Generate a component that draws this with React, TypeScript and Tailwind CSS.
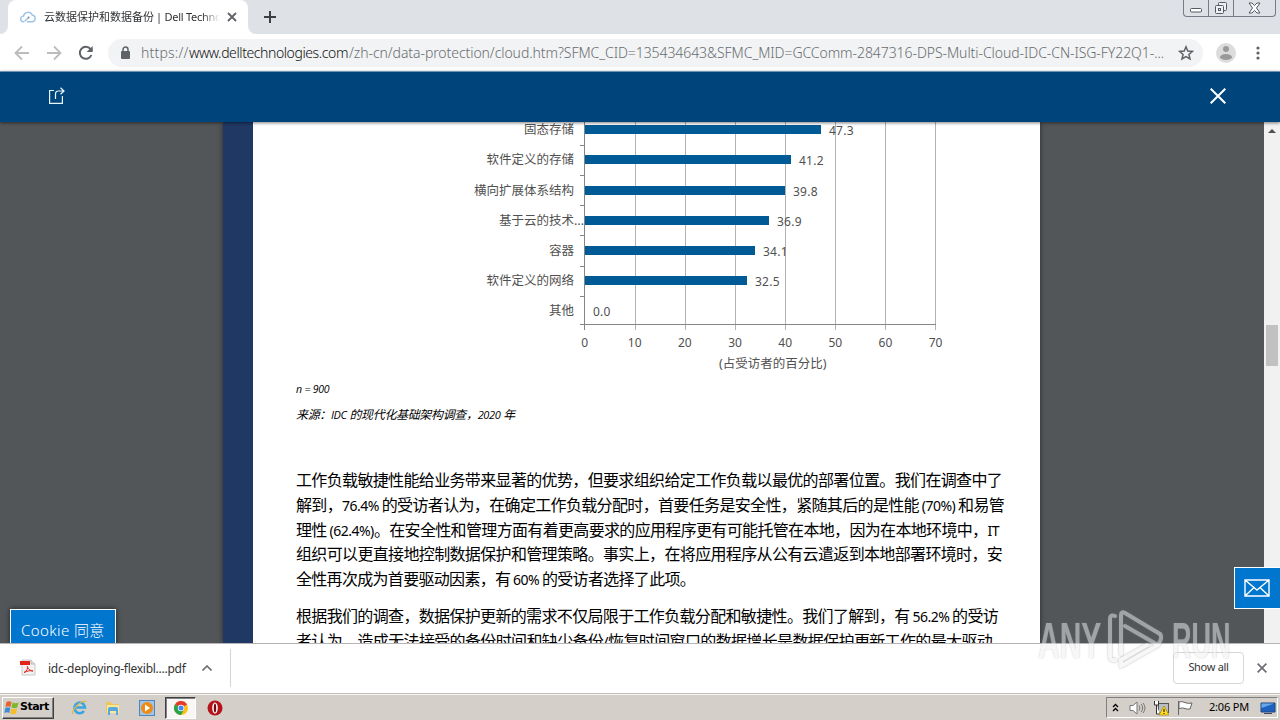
import type { ReactNode } from "react";

const bars = [
  { label: "固态存储", value: "47.3", width: 236 },
  { label: "软件定义的存储", value: "41.2", width: 206 },
  { label: "横向扩展体系结构", value: "39.8", width: 200 },
  { label: "基于云的技术", value: "36.9", width: 184, cut: true },
  { label: "容器", value: "34.1", width: 170 },
  { label: "软件定义的网络", value: "32.5", width: 162 },
  { label: "其他", value: "0.0", width: 0 },
];

const ticks = [0, 10, 20, 30, 40, 50, 60, 70];

const firstParagraph = [
  { text: "工作负载敏捷性能给业务带来显著的优势，但要求组织给定工作负载以最优的部署位置。我们在调查中了", width: 706 },
  { text: "解到，76.4% 的受访者认为，在确定工作负载分配时，首要任务是安全性，紧随其后的是性能 (70%) 和易管", width: 708 },
  { text: "理性 (62.4%)。在安全性和管理方面有着更高要求的应用程序更有可能托管在本地，因为在本地环境中，IT", width: 703 },
  { text: "组织可以更直接地控制数据保护和管理策略。事实上，在将应用程序从公有云遣返到本地部署环境时，安", width: 706 },
  { text: "全性再次成为首要驱动因素，有 60% 的受访者选择了此项。", width: 399 },
];

const secondParagraph = [
  { text: "根据我们的调查，数据保护更新的需求不仅局限于工作负载分配和敏捷性。我们了解到，有 56.2% 的受访", width: 702 },
  { text: "者认为，造成无法接受的备份时间和缺少备份/恢复时间窗口的数据增长是数据保护更新工作的最大驱动", width: 696 },
];

// Latin runs are set a little smaller than the Chinese glyphs around them
function Mixed({ text }: { text: string }) {
  return text.split(/([\x20-\x7e]+)/).map((part, i) =>
    i % 2 ? (
      <span key={i} className="text-[14px] tracking-[-0.5px] [word-spacing:-0.5px]">
        {part}
      </span>
    ) : (
      part
    )
  );
}

function Line({ text, width }: { text: string; width: number }) {
  return (
    <div
      className="h-[24.8px] whitespace-nowrap leading-[24.8px] [text-align-last:justify]"
      style={{ width }}
    >
      <Mixed text={text} />
    </div>
  );
}

function Tab() {
  return (
    <div className="flex h-[34px] shrink-0 items-end bg-[#dee1e6]">
      <div className="h-2 w-2 bg-white">
        <div className="h-2 w-2 rounded-br-lg bg-[#dee1e6]" />
      </div>
      <div className="flex h-[34px] w-[240px] items-center rounded-t-lg bg-white pl-3">
        <svg width="16" height="16" viewBox="0 0 16 16" fill="none" stroke="#9cc4e6" strokeWidth="1.4">
          <path d="M4 12.7H3.5a2.8 2.8 0 0 1 0-5.6A4.6 4.6 0 0 1 12.2 6a3.4 3.4 0 0 1 .3 6.7H7" />
          <path d="M4.5 12.5 8 9" />
          <circle cx="8.6" cy="8.6" r="1" fill="#5e8fc0" stroke="none" />
        </svg>
        <div className="ml-2 w-[176px] overflow-hidden whitespace-nowrap text-[11px] leading-5 text-[#303336] [mask-image:linear-gradient(90deg,#000_90%,transparent)]">
          云数据保护和数据备份<span className="ml-[2px] tracking-[-0.25px]">| Dell Techno</span>
        </div>
        <svg className="ml-[7px]" width="10" height="10" viewBox="0 0 10 10" stroke="#5f6368" strokeWidth="1.8">
          <path d="m1 1 8 8M9 1 1 9" />
        </svg>
      </div>
      <div className="h-2 w-2 bg-white">
        <div className="h-2 w-2 rounded-bl-lg bg-[#dee1e6]" />
      </div>
      <svg className="mb-[11px] ml-[8px]" width="12" height="12" viewBox="0 0 12 12" stroke="#3c4043" strokeWidth="2">
        <path d="M6 0v12M0 6h12" />
      </svg>
      <div className="mb-[17px] ml-auto mr-[4px] flex h-[17px] w-[93px] rounded-b-[4px] border border-t-0 border-[#777b85]">
        <div className="flex w-[25px] items-center justify-center border-r border-[#777b85]">
          <svg width="13" height="16" viewBox="0 0 13 16" fill="#fff" stroke="#555a65">
            <rect x=".5" y="8.5" width="11" height="3.5" rx="1" />
          </svg>
        </div>
        <div className="flex w-[25px] items-center justify-center border-r border-[#777b85]">
          <svg width="14" height="15" viewBox="0 0 14 15" fill="#eef0f3" stroke="#555a65">
            <rect x="4.5" y="1.5" width="8" height="8" rx="1" />
            <rect x="1.5" y="4.5" width="8" height="8" rx="1" />
            <rect x="4.5" y="7.5" width="2" height="2" />
          </svg>
        </div>
        <div className="flex flex-1 items-center justify-center">
          <svg width="13" height="12" viewBox="0 0 13 12" fill="#fff" stroke="#555a65">
            <path d="M1 1h3l2.5 2.6L9 1h3L8.5 6 12 11H9L6.5 8.4 4 11H1l3.5-5z" />
          </svg>
        </div>
      </div>
    </div>
  );
}

function Toolbar() {
  return (
    <div className="flex h-[37px] shrink-0 items-center bg-white pl-[14px]">
      <svg width="16" height="16" viewBox="0 0 16 16" fill="none" stroke="#babcbe" strokeWidth="1.8">
        <path d="M15 8H2M8 1.5 1.5 8 8 14.5" />
      </svg>
      <svg className="ml-4" width="16" height="16" viewBox="0 0 16 16" fill="none" stroke="#babcbe" strokeWidth="1.8">
        <path d="M1 8h13M8 1.5 14.5 8 8 14.5" />
      </svg>
      <svg className="ml-4" width="16" height="16" viewBox="0 0 16 16" fill="none" stroke="#5f6368" strokeWidth="2">
        <path d="M13.4 10A6 6 0 1 1 12.5 4L14 5.7" />
        <path d="M14.7 1v6H8.7z" fill="#5f6368" stroke="none" />
      </svg>
      <div className="ml-[14px] flex h-[28px] w-[1095px] shrink-0 items-center rounded-full bg-[#f1f3f4] pl-[12px]">
        <svg width="12" height="14" viewBox="0 0 12 14">
          <rect x="1" y="5" width="9" height="8" rx="1" fill="#5f6368" />
          <path d="M3 5.5V3.5a2.5 2.5 0 0 1 5 0v2" fill="none" stroke="#5f6368" strokeWidth="1.5" />
        </svg>
        <div className="ml-[9px] flex w-[1027px] whitespace-nowrap text-[14px] font-light leading-[26px] text-[#696d71]">
          <span className="w-[48px] tracking-[0.2px]">https://</span>
          <span className="w-[160px] tracking-[-0.41px] text-[#111]">www.delltechnologies.com</span>
          <span className="tracking-[-0.07px]">
            /zh-cn/data-protection/cloud.htm?SFMC_CID=135434643&amp;SFMC_MID=GCComm-2847316-DPS-Multi-Cloud-IDC-CN-ISG-FY22Q1-...
          </span>
        </div>
        <svg className="ml-[10px]" width="16" height="16" viewBox="0 0 16 16" fill="none" stroke="#5f6368" strokeWidth="1.5">
          <path d="m8 1.8 1.8 4.2 4.6.4-3.5 3 1.1 4.5-4-2.4-4 2.4 1.1-4.5-3.5-3 4.6-.4z" />
        </svg>
      </div>
      <svg className="ml-[13px]" width="20" height="20" viewBox="0 0 20 20">
        <circle cx="10" cy="10" r="10" fill="#dcdcdc" />
        <circle cx="10" cy="6" r="3" fill="#999" />
        <ellipse cx="10" cy="14" rx="6" ry="3" fill="#999" />
      </svg>
      <svg className="ml-[20px]" width="4" height="14" viewBox="0 0 4 14" fill="#5f6368">
        <circle cx="2" cy="2" r="1.6" />
        <circle cx="2" cy="7" r="1.6" />
        <circle cx="2" cy="12" r="1.6" />
      </svg>
    </div>
  );
}

function Header() {
  return (
    <div className="relative z-10 flex h-[51px] shrink-0 items-center justify-between border-t border-[#6d94b5] bg-[#00447c] pl-[49px] pr-[54px] shadow-[0_1px_3px_rgba(0,0,0,0.5)]">
      <svg className="mb-1" width="17" height="17" viewBox="0 0 17 17" fill="none" stroke="#e8f5fb" strokeWidth="1.2">
        <path d="M5 3.5H.6v12.8h12.8V9M6.5 12V7q0-3 3-3H15M11.5.8 15 4l-3.5 3.3" />
      </svg>
      <svg className="mb-[3px]" width="16" height="16" viewBox="0 0 16 16" stroke="#fff" strokeWidth="2">
        <path d="m.7.7 14.6 14.6M15.3.7.7 15.3" />
      </svg>
    </div>
  );
}

function Chart() {
  return (
    <div className="relative h-[254px] text-[12.5px] text-[#505050]">
      {/* grid and axes */}
      <svg className="absolute left-[331px] top-0" width="356" height="210" viewBox="0 0 356 210" fill="none">
        <path d="M51.5 0v208M101.5 0v208M151.5 0v208M201.5 0v208M251.5 0v208M301.5 0v208M351.5 0v208" stroke="#b2b2b2" />
        <path d="M.5 0v208M0 202.5h352" stroke="#858585" />
      </svg>
      <svg className="absolute left-[327px] top-0" width="5" height="210" viewBox="0 0 5 210">
        <path d="M0 23.5h5M0 53.5h5M0 83.5h5M0 113.5h5M0 144.5h5M0 174.5h5M0 202.5h5" stroke="#858585" />
      </svg>
      <div className="relative flex flex-col">
        {bars.map((bar, i) => (
          <div
            key={bar.label}
            className={`flex h-[30.1px] items-center ${i === 0 ? "-mt-[7.2px]" : ""}`}
          >
            <div className="relative w-[321px] whitespace-nowrap text-right leading-[17px]">
              {bar.label}
              {bar.cut && <span className="absolute left-[321px] top-0">...</span>}
            </div>
            <div className="ml-[11px] h-[9px] bg-[#005a96]" style={{ width: bar.width }} />
            <div className="ml-[8px] mt-[2px] text-[12px] leading-[17px] tracking-[0.25px]">
              {bar.value}
            </div>
          </div>
        ))}
      </div>
      <div className="relative ml-[306.5px] mt-[8.7px] flex text-[12px] leading-[17px]">
        {ticks.map((tick) => (
          <div key={tick} className="w-[50.15px] text-center">
            {tick}
          </div>
        ))}
      </div>
      <div className="relative ml-[466px] mt-[4px] whitespace-nowrap leading-[17px]">
        (占受访者的百分比)
      </div>
    </div>
  );
}

function Document() {
  return (
    <div className="flex w-[817px] shrink-0 bg-white shadow-[0_0_5px_rgba(0,0,0,0.5)]">
      <div className="w-[30px] shrink-0 bg-[#1f3864]" />
      <div className="w-[787px] shrink-0 text-black">
        <Chart />
        <div className="ml-[43px] font-['Open_Sans','Noto_Sans_CJK_SC',sans-serif] italic">
          <div className="mt-[4px] h-[18px] text-[10.5px] leading-[18px] tracking-[-0.2px]">n = 900</div>
          <div className="mt-[8px] h-[18px] whitespace-nowrap text-[12px] leading-[18px] tracking-[-0.35px]">
            来源：<span className="text-[11px]">IDC</span> 的现代化基础架构调查，
            <span className="text-[11px]">2020</span> 年
          </div>
        </div>
        <div className="ml-[43px] mt-[44px] text-[16px] tracking-[-0.8px]">
          {firstParagraph.map((line) => (
            <Line key={line.text} {...line} />
          ))}
          <div className="mt-[12px]">
            {secondParagraph.map((line) => (
              <Line key={line.text} {...line} />
            ))}
          </div>
        </div>
      </div>
    </div>
  );
}

function Viewer() {
  return (
    <div className="relative flex h-[521px] shrink-0 overflow-hidden bg-[#525659] pl-[223px]">
      <Document />
      <div className="ml-auto w-4 bg-[#f1f1f1]">
        <svg className="mx-auto mt-[7px]" width="8" height="4" viewBox="0 0 8 4" fill="#505050">
          <path d="M4 0 8 4H0z" />
        </svg>
        <div className="ml-[2px] mt-[192px] h-[41px] w-[12px] bg-[#c1c1c1]" />
      </div>
      <div className="absolute left-[10px] top-[487px] h-[40px] w-[106px] whitespace-nowrap border border-white bg-[#0076ce] pl-[10px] pt-[10px] text-[15px] font-light leading-5 tracking-[0.4px] text-white shadow-[0_0_5px_rgba(0,0,0,0.6)]">
        Cookie 同意
      </div>
      <div className="absolute right-0 top-[445px] flex h-[42px] w-[46px] items-center border border-r-0 border-white bg-[#0076ce] pl-[9px]">
        <svg width="26" height="18" viewBox="0 0 26 18" fill="none" stroke="#fff" strokeWidth="1.4">
          <path d="M1 1h24v16H1zM1 1l12 10L25 1M1 17l9-8.5M25 17l-9-8.5" />
        </svg>
      </div>
    </div>
  );
}

function Downloads() {
  return (
    <div className="flex h-[50px] shrink-0 items-center border-t border-[#b6b4b6] bg-white pb-[2px]">
      <svg className="ml-[19px]" width="18" height="18" viewBox="0 0 18 18">
        <path d="M3 1h9l4 4v11H3z" fill="#f2f2f2" stroke="#c8c8c8" />
        <path d="M12 1v4h4" fill="#ddd" stroke="#bbb" />
        <path d="M1 2h10v4H1z" fill="#e2231a" />
        <path d="M5 13.5C8 12 9 9 8.5 7.5c-.7-1 .5 4 5.5 4.5-4-1-6 .5-9 1.5z" fill="none" stroke="#e2231a" />
      </svg>
      <div className="ml-[11px] mt-[3px] w-[140px] whitespace-nowrap text-[12px] leading-5 tracking-[-0.27px] text-[#333]">
        idc-deploying-flexibl....pdf
      </div>
      <svg className="ml-[14px]" width="10" height="6" viewBox="0 0 10 6" fill="none" stroke="#6b6e72" strokeWidth="1.6">
        <path d="m.5 5.5 4.5-4.5 4.5 4.5" />
      </svg>
      <div className="ml-[18px] h-[38px] w-px bg-[#d4d4d4]" />
      <div className="ml-auto flex h-[32px] w-[71px] items-center justify-center whitespace-nowrap rounded-[4px] border border-[#d5d6d8] text-[11px] tracking-[-0.3px] text-[#333]">
        Show all
      </div>
      <svg className="ml-[13px] mr-[13px]" width="10" height="10" viewBox="0 0 10 10" stroke="#6b6e72" strokeWidth="1.7">
        <path d="m.6.6 8.8 8.8M9.4.6.6 9.4" />
      </svg>
    </div>
  );
}

function WindowsFlag() {
  return (
    <svg width="16" height="16" viewBox="0 0 16 16">
      <path d="M2.5 2Q5 .5 7.5 2L6.5 7Q4 5.5 1.5 7z" fill="#e8622c" />
      <path d="M8.5 2.5Q11 4 14.5 2.5L13.3 7.5Q10.5 9 7.5 7.5z" fill="#7cb82f" />
      <path d="M1.3 8Q4 6.5 6.3 8L5.3 13Q3 11.5.3 13z" fill="#3d8ddb" />
      <path d="M7.3 8.5Q10 10 13 8.5L12 13.5Q9 15 6.2 13.5z" fill="#f6bd27" />
    </svg>
  );
}

function TaskIcon({ children }: { children: ReactNode }) {
  return <div className="flex h-[22px] w-[34px] items-center justify-center">{children}</div>;
}

function Taskbar() {
  return (
    <div className="flex h-[28px] shrink-0 items-center border-t border-[#c4c1bb] bg-[#d4cfc8] shadow-[inset_0_1px_0_#f6f4f1]">
      <div className="ml-[2px] flex h-[22px] w-[52px] items-center border border-b-[#404040] border-l-white border-r-[#404040] border-t-white pl-px font-['DejaVu_Sans'] text-[11px] font-bold tracking-[-0.5px] text-black shadow-[inset_-1px_-1px_0_#808080]">
        <WindowsFlag />
        <span>Start</span>
      </div>
      <div className="ml-[8px] flex">
        <TaskIcon>
          <svg width="17" height="17" viewBox="0 0 17 17" fill="none">
            <path d="M13 12A5.3 5.3 0 1 1 14 8.5H4.5" stroke="#39a5e3" strokeWidth="2.6" />
            <path d="M2 15C-1 12 11 0 15.5 2.5" stroke="#e6b93e" strokeWidth="1.3" />
          </svg>
        </TaskIcon>
        <TaskIcon>
          <svg width="16" height="16" viewBox="0 0 16 16">
            <path d="M1 2h5l1 2h7v9H1z" fill="#ecc65a" />
            <path d="M2 5h12v8H2z" fill="#f9e89b" />
            <path d="M3 9q0-2 2-2h6q2 0 2 2v6h-2v-4H5v4H3z" fill="#55a9dc" />
          </svg>
        </TaskIcon>
        <TaskIcon>
          <svg width="16" height="16" viewBox="0 0 16 16">
            <rect x=".5" y=".5" width="15" height="15" fill="#9fc6e8" stroke="#5085ba" />
            <circle cx="8" cy="8" r="6" fill="#f08a16" />
            <path d="m6 4.5 5 3.5-5 3.5z" fill="#fff" />
          </svg>
        </TaskIcon>
        <div className="ml-px flex h-[22px] w-[31px] items-center justify-center border border-b-white border-l-[#404040] border-r-white border-t-[#404040] bg-[#f8f7f5] shadow-[inset_1px_1px_0_#808080]">
          <svg width="14" height="14" viewBox="0 0 14 14">
            <circle cx="7" cy="7" r="7" fill="#fbc116" />
            <path d="M7 7 .9 3.5A7 7 0 0 1 13.1 3.5z" fill="#e33b2e" />
            <path d="M7 7 .9 3.5A7 7 0 0 0 7 14l3-5.3z" fill="#2ba24c" />
            <circle cx="7" cy="7" r="3.2" fill="#fff" />
            <circle cx="7" cy="7" r="2.5" fill="#4285f4" />
          </svg>
        </div>
        <TaskIcon>
          <svg className="ml-[3px]" width="16" height="16" viewBox="0 0 16 16">
            <circle cx="8" cy="8" r="7.5" fill="#b5121b" />
            <ellipse cx="8" cy="8" rx="2.8" ry="5.5" fill="#fff" />
            <ellipse cx="8" cy="8" rx="1.2" ry="4.6" fill="#74090f" />
          </svg>
        </TaskIcon>
      </div>
      <div className="ml-auto mr-[2px] flex h-[21px] w-[172px] items-center border border-b-white border-l-[#808080] border-r-white border-t-[#808080] pl-[5px]">
        <svg width="7" height="10" viewBox="0 0 7 10" fill="none" stroke="#000" strokeWidth="1.3">
          <path d="M1 4l2.5-2.5L6 4M1 8l2.5-2.5L6 8" />
        </svg>
        <svg className="ml-[10px]" width="17" height="16" viewBox="0 0 17 16" fill="none" stroke="#777">
          <path d="M1 5.5h3L8 2v12l-4-3.5H1z" fill="#fff" />
          <path d="M10 5.5q2 2.5 0 5M12 4q3.5 4 0 8M14 3q4 5 0 10" />
        </svg>
        <svg className="ml-[7px]" width="16" height="16" viewBox="0 0 16 16">
          <rect x="5.5" y="3.5" width="10" height="9" fill="#b9bec3" stroke="#555" />
          <path d="M1.5 1v4h4V1M3.5 5v9H7" fill="#fff" stroke="#333" />
          <path d="m11 6 5 9H6z" fill="#ffdf20" stroke="#a98400" strokeWidth=".7" />
          <path d="M11 9v3M11 13v1" stroke="#000" />
        </svg>
        <svg className="ml-[8px]" width="16" height="16" viewBox="0 0 16 16" fill="#fff" stroke="#666">
          <path d="M1.5 1v14M2 2q3-1 6 .5t7 .5l-2 6q-3 .5-5-.5t-6 0z" />
        </svg>
        <div className="ml-[16px] w-[42px] whitespace-nowrap text-[11px] tracking-[-0.2px] text-black">2:06 PM</div>
        <svg className="ml-[9px]" width="16" height="14" viewBox="0 0 16 14">
          <path d="M1 2h14v9H1z" fill="#1e62bf" stroke="#234578" />
          <path d="M1.5 7 14 2.5H1.5z" fill="#69a8e8" />
          <path d="M4 12.5h8" stroke="#446" />
        </svg>
      </div>
    </div>
  );
}

function Watermark() {
  return (
    <div className="pointer-events-none absolute left-[1038px] top-[608px] z-20 flex h-[64px] w-[198px] font-['Liberation_Sans'] text-[50px] font-bold leading-[66px] opacity-50">
      <span className="w-[69px] shrink-0 origin-left scale-x-[0.6] text-[#f0f0f0] [text-shadow:0_0_2px_#888]">
        ANY
      </span>
      <svg
        width="58"
        height="64"
        viewBox="0 0 58 64"
        fill="none"
        stroke="#f0f0f0"
        strokeWidth="4"
        strokeLinejoin="round"
        strokeLinecap="round"
        className="shrink-0 drop-shadow-[0_0_1px_#777]"
      >
        <path d="M8 8q-5-2-5 3v37q0 5 5 4M14 46V7q0-4 4-2l35 21M18 18l33 19-37 21v-6l26-15" />
        <path d="M53 26q3 3-2 11" />
      </svg>
      <span className="ml-[7px] w-[60px] shrink-0 origin-left scale-x-[0.54] text-[#f0f0f0] [text-shadow:0_0_2px_#888]">
        RUN
      </span>
    </div>
  );
}

function App() {
  return (
    <div className="relative flex h-[720px] w-[1280px] flex-col overflow-hidden bg-white font-['Noto_Sans','Noto_Sans_CJK_SC',sans-serif]">
      <Tab />
      <Toolbar />
      <Header />
      <Viewer />
      <Downloads />
      <Taskbar />
      <Watermark />
    </div>
  );
}

export default App;
